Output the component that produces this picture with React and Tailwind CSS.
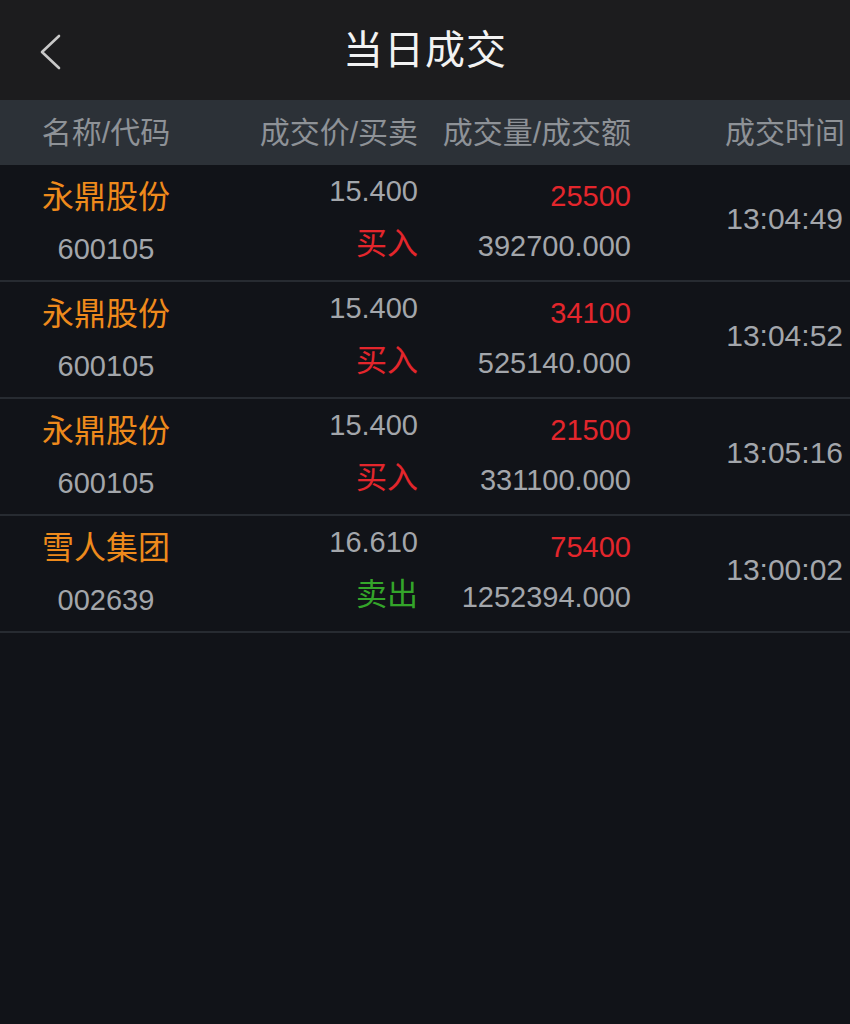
const ROWS = [
  { name: '永鼎股份', code: '600105', price: '15.400', side: '买入', vol: '25500', amt: '392700.000', time: '13:04:49' },
  { name: '永鼎股份', code: '600105', price: '15.400', side: '买入', vol: '34100', amt: '525140.000', time: '13:04:52' },
  { name: '永鼎股份', code: '600105', price: '15.400', side: '买入', vol: '21500', amt: '331100.000', time: '13:05:16' },
  { name: '雪人集团', code: '002639', price: '16.610', side: '卖出', vol: '75400', amt: '1252394.000', time: '13:00:02' },
]

const FONT = { fontFamily: '"Liberation Sans", "Noto Sans CJK SC", sans-serif' }

export default function App() {
  return (
    <div className="w-[850px] h-[1024px] bg-[#111318] overflow-hidden" style={FONT}>
      {/* title bar */}
      <div className="relative h-[100px] bg-[#1c1c1e] flex items-center justify-center">
        <svg className="absolute left-[38px] top-[34px]" width="24" height="36" viewBox="0 0 24 36" fill="none">
          <path d="M21 2 L4 18 L21 34" stroke="#c8c8c8" strokeWidth="2.6" strokeLinecap="round" strokeLinejoin="round" />
        </svg>
        <h1 className="text-[40px] text-[#f2f2f2] leading-none tracking-[1px]">当日成交</h1>
      </div>

      {/* column headers */}
      <div className="h-[65px] bg-[#2c3137] grid grid-cols-[212px_206px_213px_219px] items-center text-[30px] text-[#8e9297]">
        <div className="text-center">名称/代码</div>
        <div className="text-right">成交价/买卖</div>
        <div className="text-right">成交量/成交额</div>
        <div className="text-right pr-[5px]">成交时间</div>
      </div>

      {ROWS.map((r, i) => (
        <div key={i} className="h-[117px] border-b-2 border-[#272b31] grid grid-cols-[212px_206px_213px_219px]">
          <div className="flex flex-col items-center pt-[13px]">
            <span className="text-[32px] leading-[38px] text-[#ee8a1c]">{r.name}</span>
            <span className="text-[29px] leading-[34px] mt-[16px] text-[#a3a6ab]">{r.code}</span>
          </div>
          <div className="flex flex-col items-end pt-[9px]">
            <span className="text-[29px] leading-[34px] text-[#a3a6ab]">{r.price}</span>
            <span className={`text-[31px] leading-[38px] mt-[17px] ${r.side === '买入' ? 'text-[#e3262c]' : 'text-[#34a52a]'}`}>{r.side}</span>
          </div>
          <div className="flex flex-col items-end pt-[14px]">
            <span className="text-[29px] leading-[34px] text-[#e3262c]">{r.vol}</span>
            <span className="text-[29px] leading-[34px] mt-[16px] text-[#a3a6ab]">{r.amt}</span>
          </div>
          <div className="flex items-center justify-end pr-[7px] pb-[8px]">
            <span className="text-[30px] text-[#a3a6ab]">{r.time}</span>
          </div>
        </div>
      ))}
    </div>
  )
}
